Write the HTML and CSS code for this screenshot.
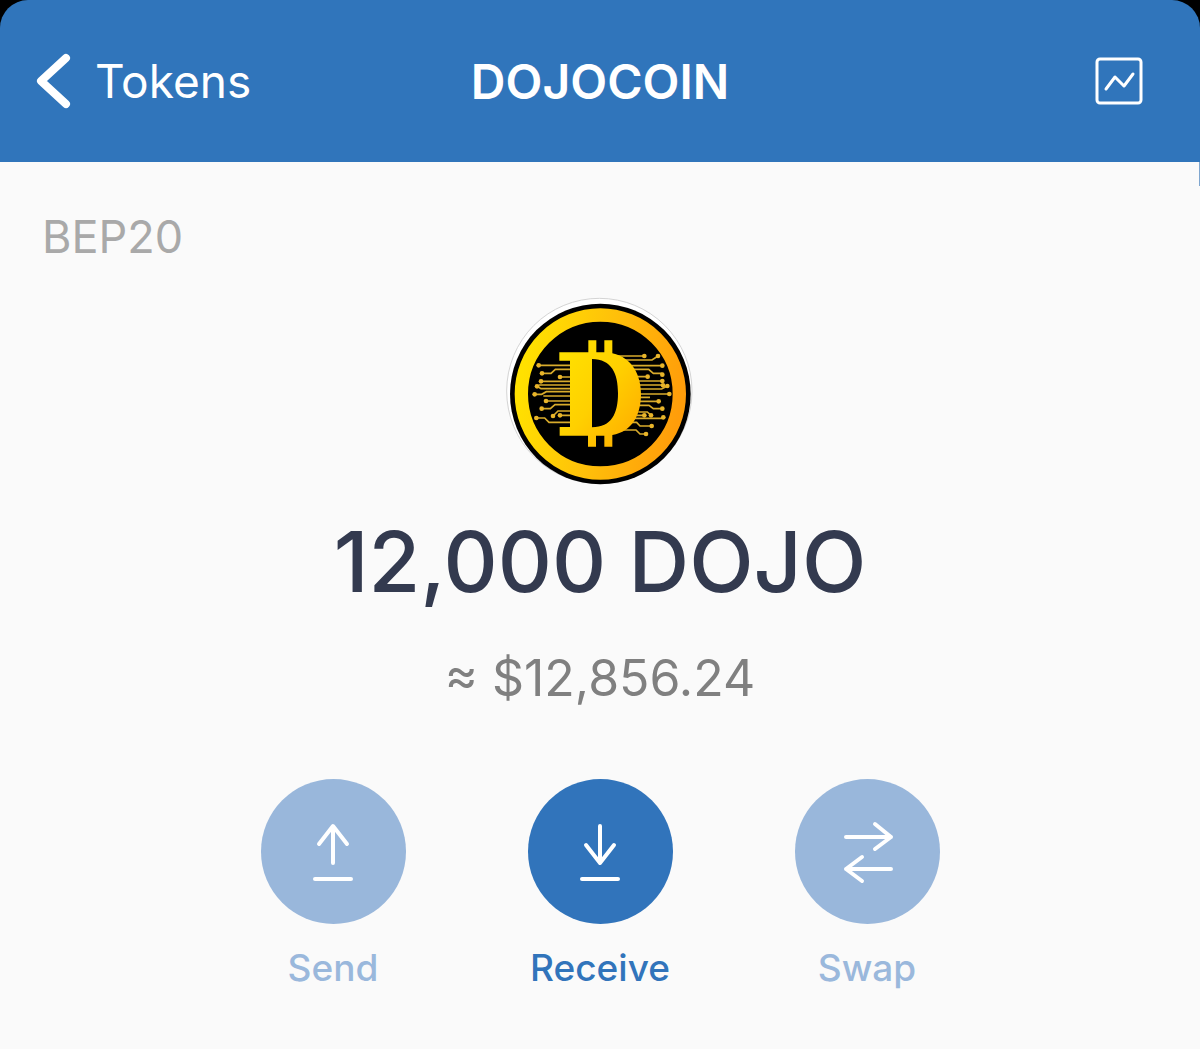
FILE: index.html
```html
<!DOCTYPE html>
<html lang="en">
<head>
    <meta charset="UTF-8">
    <meta name="viewport" content="width=device-width, initial-scale=1.0">
    <title>DOJOCOIN</title>
    <link rel="stylesheet" href="styles.css">
</head>
<body>
    <div class="top">
        <header class="navbar">
            <a class="back" href="#">
                <svg width="36" height="58" viewBox="0 0 36 58" fill="none" stroke="#fff" stroke-width="8" stroke-linecap="round" stroke-linejoin="round">
                    <path d="M30 6L5 29l25 23"/>
                </svg>
                Tokens
            </a>
            <h1>DOJOCOIN</h1>
            <button class="chart" type="button" aria-label="Price chart">
                <svg width="48" height="48" viewBox="0 0 48 48" fill="none" stroke="#fff" stroke-width="3" stroke-linecap="round" stroke-linejoin="round">
                    <rect x="2" y="2" width="44" height="44" rx="3"/>
                    <path d="M11 32l9-12 9 9 9-12"/>
                </svg>
            </button>
        </header>
    </div>

    <main>
        <p class="network">BEP20</p>

        <svg class="logo" width="200" height="200" viewBox="0 0 600 600" role="img" aria-label="Dojocoin logo">
            <defs>
                <linearGradient id="ring" x1="0" y1="0.4" x2="1" y2="0.6">
                    <stop offset="0" stop-color="#ffe100"/>
                    <stop offset="0.5" stop-color="#ffc00a"/>
                    <stop offset="1" stop-color="#ff9d0a"/>
                </linearGradient>
                <linearGradient id="letter" x1="0" y1="0" x2="1" y2="1">
                    <stop offset="0" stop-color="#ffe400"/>
                    <stop offset="0.5" stop-color="#ffd000"/>
                    <stop offset="1" stop-color="#ffa800"/>
                </linearGradient>
            </defs>
            <circle cx="298" cy="303" r="278" fill="#fff" stroke="#d4d4d4" stroke-width="3"/>
            <circle cx="301" cy="312" r="271" fill="#000"/>
            <circle cx="301" cy="312" r="237" fill="none" stroke="url(#ring)" stroke-width="40"/>
            <!-- circuit lines, left side -->
            <g fill="none" stroke="#d8ab2c" stroke-width="5">
                <path d="M116 226H210M126 250H153L166 238H210M180 261H210M123 274H210M110 288L123 296H210M116 285H210M104 313H125L139 305H210M138 333H210M125 356H151L165 344H210M180 376H210M159 378L174 363H210M109 384H134L147 397H210M130 318H210"/>
            </g>
            <!-- circuit lines, right side -->
            <g fill="none" stroke="#d8ab2c" stroke-width="5">
                <path d="M340 198H433M370 210H456L474 198M385 227H487M400 238H446L460 250H487M410 260H443M415 273H487M415 285H490M415 297H485L502 288M415 312H508M415 322H450M415 334H476M415 346H447L460 356H487M415 366H442L453 376M410 376H433M400 385H490M385 397H410L420 408H455M360 420H408L420 432H438"/>
            </g>
            <g fill="#e8b42a">
                <circle cx="116" cy="226" r="7"/><circle cx="126" cy="250" r="7"/><circle cx="180" cy="261" r="7"/>
                <circle cx="123" cy="274" r="7"/><circle cx="111" cy="289" r="7"/><circle cx="104" cy="313" r="7"/>
                <circle cx="138" cy="333" r="7"/><circle cx="125" cy="356" r="7"/><circle cx="159" cy="378" r="7"/>
                <circle cx="180" cy="376" r="7"/><circle cx="109" cy="384" r="7"/>
                <circle cx="433" cy="198" r="7"/><circle cx="474" cy="198" r="7"/><circle cx="487" cy="227" r="7"/>
                <circle cx="443" cy="260" r="7"/><circle cx="487" cy="254" r="7"/><circle cx="487" cy="273" r="7"/>
                <circle cx="489" cy="286" r="7"/><circle cx="502" cy="288" r="7"/><circle cx="508" cy="312" r="7"/>
                <circle cx="476" cy="334" r="7"/><circle cx="487" cy="356" r="7"/><circle cx="433" cy="376" r="7"/>
                <circle cx="453" cy="376" r="7"/><circle cx="490" cy="382" r="7"/><circle cx="455" cy="408" r="7"/>
                <circle cx="438" cy="432" r="7"/>
            </g>
            <!-- coin symbol -->
            <path fill="#000" d="M276 207H340V412H276Z"/>
            <path fill="url(#letter)" fill-rule="evenodd" d="M178 187H265V151H289V187H313V151H337V190C398 203 423 258 423 312C423 372 398 425 337 435V470H313V437H288V470H264V437H179V411H210V212H178ZM276 207V412C335 412 354 370 354 310C354 250 335 208 276 207Z"/>
        </svg>

        <p class="balance">12,000 DOJO</p>
        <p class="value">≈ $12,856.24</p>

        <div class="actions">
            <button class="action" type="button" disabled>
                <span class="circle">
                    <svg width="60" height="60" viewBox="0 0 60 60">
                        <path d="M30 41V5M16 22L30 4l14 18"/>
                        <path d="M12 57H48"/>
                    </svg>
                </span>
                Send
            </button>
            <button class="action" type="button">
                <span class="circle">
                    <svg width="60" height="60" viewBox="0 0 60 60">
                        <path d="M30 4V41M16 23l14 18 14-18"/>
                        <path d="M12 57H48"/>
                    </svg>
                </span>
                Receive
            </button>
            <button class="action" type="button" disabled>
                <span class="circle">
                    <svg width="60" height="60" viewBox="0 0 60 60">
                        <path d="M9 15H54M38 2l16 13-16 12"/>
                        <path d="M54 47H9M25 35L9 47l16 12"/>
                    </svg>
                </span>
                Swap
            </button>
        </div>
    </main>
</body>
</html>
```

FILE: styles.css
```css
* {
    box-sizing: border-box;
}
body {
    margin: 0;
    font-family: Inter, "Liberation Sans", sans-serif;
    background-color: #fafafa;
}
h1, p {
    margin: 0;
}
button {
    padding: 0;
    border: none;
    background: none;
    font-family: inherit;
    cursor: pointer;
}
svg {
    display: block;
}
.top {
    background-color: #000;
}
.navbar {
    position: relative;
    display: grid;
    grid-template-columns: 1fr auto 1fr;
    align-items: center;
    height: 162px;
    padding: 0 36px;
    border-radius: 28px 28px 0 0;
    background-color: #3075bb;
    color: #fff;
}
/* thin edge running on below the bar */
.navbar::after {
    content: "";
    position: absolute;
    top: 100%;
    right: 0;
    width: 1px;
    height: 24px;
    background-color: #7fa6cf;
}
.back {
    display: flex;
    align-items: center;
    gap: 23px;
    color: #fff;
    font-size: 46px;
    text-decoration: none;
}
h1 {
    font-size: 48px;
    font-weight: 600;
}
.chart {
    justify-self: end;
    margin-right: 21px;
}
main {
    display: flex;
    flex-direction: column;
    align-items: center;
    padding: 47px 42px;
}
.network {
    align-self: flex-start;
    font-size: 45px;
    line-height: 56px;
    color: #a9a9a9;
}
.logo {
    margin-top: 25px;
}
.balance {
    margin-top: 20px;
    font-size: 84px;
    font-weight: 500;
    line-height: 104px;
    color: #333a4f;
}
.value {
    margin-top: 32px;
    font-size: 50px;
    line-height: 64px;
    color: #808080;
}
.actions {
    display: flex;
    justify-content: center;
    gap: 122px;
    margin-top: 69px;
}
.action {
    display: flex;
    flex-direction: column;
    align-items: center;
    gap: 20px;
    width: 145px;
    color: #3174bb;
    font-size: 37px;
    font-weight: 500;
    line-height: 48px;
}
.action:disabled {
    color: #9ab8dc;
    cursor: default;
}
.circle {
    display: flex;
    align-items: center;
    justify-content: center;
    width: 145px;
    height: 145px;
    border-radius: 50%;
    background-color: #3174bb;
}
.action:disabled .circle {
    background-color: #99b7db;
}
.circle svg {
    overflow: visible;
    fill: none;
    stroke: #fff;
    stroke-width: 4;
    stroke-linecap: round;
    stroke-linejoin: round;
}
```
